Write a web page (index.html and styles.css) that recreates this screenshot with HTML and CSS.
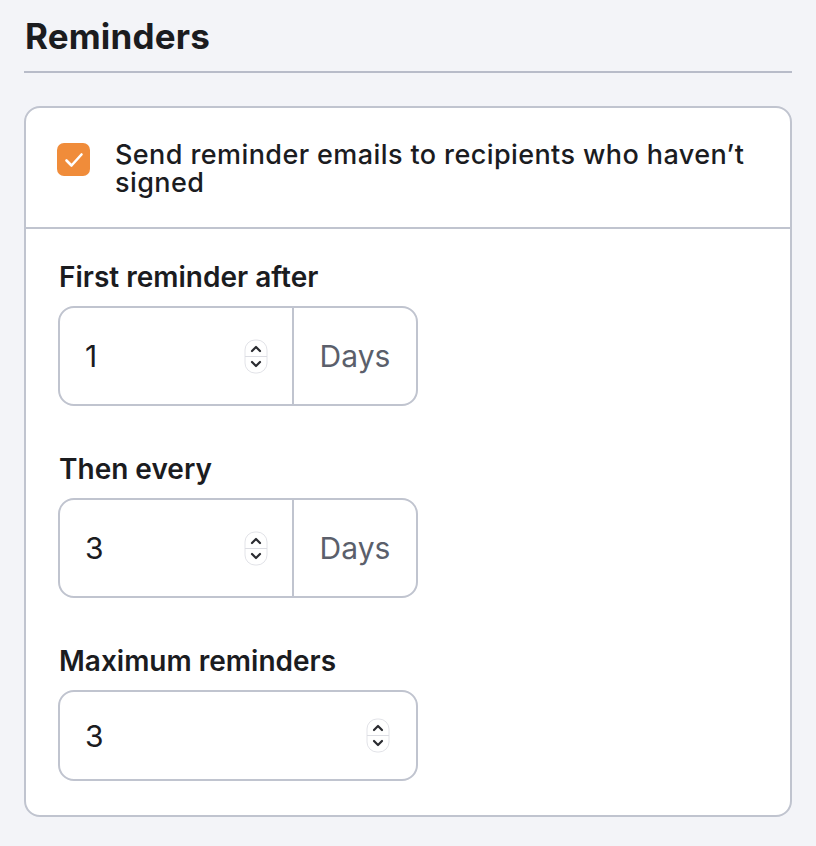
FILE: index.html
```html
<!DOCTYPE html>
<html lang="en">
<head>
    <meta charset="UTF-8">
    <title>Reminders</title>
    <link rel="stylesheet" href="styles.css">
</head>
<body>
    <div class="section-title">Reminders</div>
    <div class="card">
        <label class="check-row">
            <span class="checkbox">
                <svg width="20" height="18" viewBox="0 0 20 18"><path d="M2.5 9.5l5 5 10-11" fill="none" stroke="#fff" stroke-width="2.6" stroke-linecap="round" stroke-linejoin="round"/></svg>
            </span>
            <span class="check-text">Send reminder emails to recipients who haven’t signed</span>
        </label>
        <div class="card-body">
            <div class="field">
                <div class="field-label">First reminder after</div>
                <div class="input-group">
                    <div class="number-input">
                        <span class="value">1</span>
                        <span class="spinner">
                            <svg width="24" height="35" viewBox="0 0 24 35"><rect x="1" y="1" width="22" height="33" rx="10" fill="#fff" stroke="#e2e3e8"/><line x1="1" y1="17.5" x2="23" y2="17.5" stroke="#dcdde3"/><path d="M8 12l4-4 4 4M8 23l4 4 4-4" fill="none" stroke="#2a2b30" stroke-width="2.2" stroke-linecap="round" stroke-linejoin="round"/></svg>
                        </span>
                    </div>
                    <div class="unit">Days</div>
                </div>
            </div>
            <div class="field">
                <div class="field-label">Then every</div>
                <div class="input-group">
                    <div class="number-input">
                        <span class="value">3</span>
                        <span class="spinner">
                            <svg width="24" height="35" viewBox="0 0 24 35"><rect x="1" y="1" width="22" height="33" rx="10" fill="#fff" stroke="#e2e3e8"/><line x1="1" y1="17.5" x2="23" y2="17.5" stroke="#dcdde3"/><path d="M8 12l4-4 4 4M8 23l4 4 4-4" fill="none" stroke="#2a2b30" stroke-width="2.2" stroke-linecap="round" stroke-linejoin="round"/></svg>
                        </span>
                    </div>
                    <div class="unit">Days</div>
                </div>
            </div>
            <div class="field">
                <div class="field-label">Maximum reminders</div>
                <div class="input-group single">
                    <div class="number-input">
                        <span class="value">3</span>
                        <span class="spinner">
                            <svg width="24" height="35" viewBox="0 0 24 35"><rect x="1" y="1" width="22" height="33" rx="10" fill="#fff" stroke="#e2e3e8"/><line x1="1" y1="17.5" x2="23" y2="17.5" stroke="#dcdde3"/><path d="M8 12l4-4 4 4M8 23l4 4 4-4" fill="none" stroke="#2a2b30" stroke-width="2.2" stroke-linecap="round" stroke-linejoin="round"/></svg>
                        </span>
                    </div>
                </div>
            </div>
        </div>
    </div>
</body>
</html>
```
FILE: styles.css
```css
body {
    margin: 0;
    padding: 14px 24px 0 24px;
    background: #f3f4f8;
    font-family: Inter, "Noto Sans", sans-serif;
    color: #1b1c1f;
}

.section-title {
    font-size: 35px;
    font-weight: 700;
    line-height: 44px;
    letter-spacing: 0.005em;
    padding: 0 1px 13px 1px;
    border-bottom: 2px solid #b8bcc9;
}

.card {
    margin-top: 33px;
    background: #fff;
    border: 2px solid #c0c4cf;
    border-radius: 16px;
}

.check-row {
    display: flex;
    align-items: flex-start;
    gap: 25px;
    padding: 33px 30px 30px 31px;
    border-bottom: 2px solid #c0c4cf;
}

.checkbox {
    flex: none;
    width: 33px;
    height: 33px;
    margin-top: 2px;
    border-radius: 7px;
    background: #f08c3a;
    display: flex;
    align-items: center;
    justify-content: center;
}

.check-text {
    font-size: 27px;
    font-weight: 500;
    line-height: 28px;
    letter-spacing: 0.015em;
}

.card-body {
    padding: 30px 32px 34px 32px;
    display: flex;
    flex-direction: column;
    gap: 45px;
}

.field-label {
    font-size: 28px;
    font-weight: 600;
    line-height: 36px;
    margin-bottom: 11px;
    padding-left: 1px;
}

.input-group {
    display: flex;
    width: 356px;
    height: 96px;
    border: 2px solid #c0c4cf;
    border-radius: 16px;
}

.input-group.single {
    height: 87px;
}

.number-input {
    flex: 1;
    display: flex;
    align-items: center;
    justify-content: space-between;
    padding: 0 24px 0 25px;
}

.input-group.single .number-input {
    padding-right: 26px;
}

.value {
    font-size: 30px;
}

.spinner {
    display: flex;
}

.unit {
    width: 122px;
    border-left: 2px solid #c0c4cf;
    display: flex;
    align-items: center;
    justify-content: center;
    font-size: 30px;
    color: #5b5f6b;
}
```
